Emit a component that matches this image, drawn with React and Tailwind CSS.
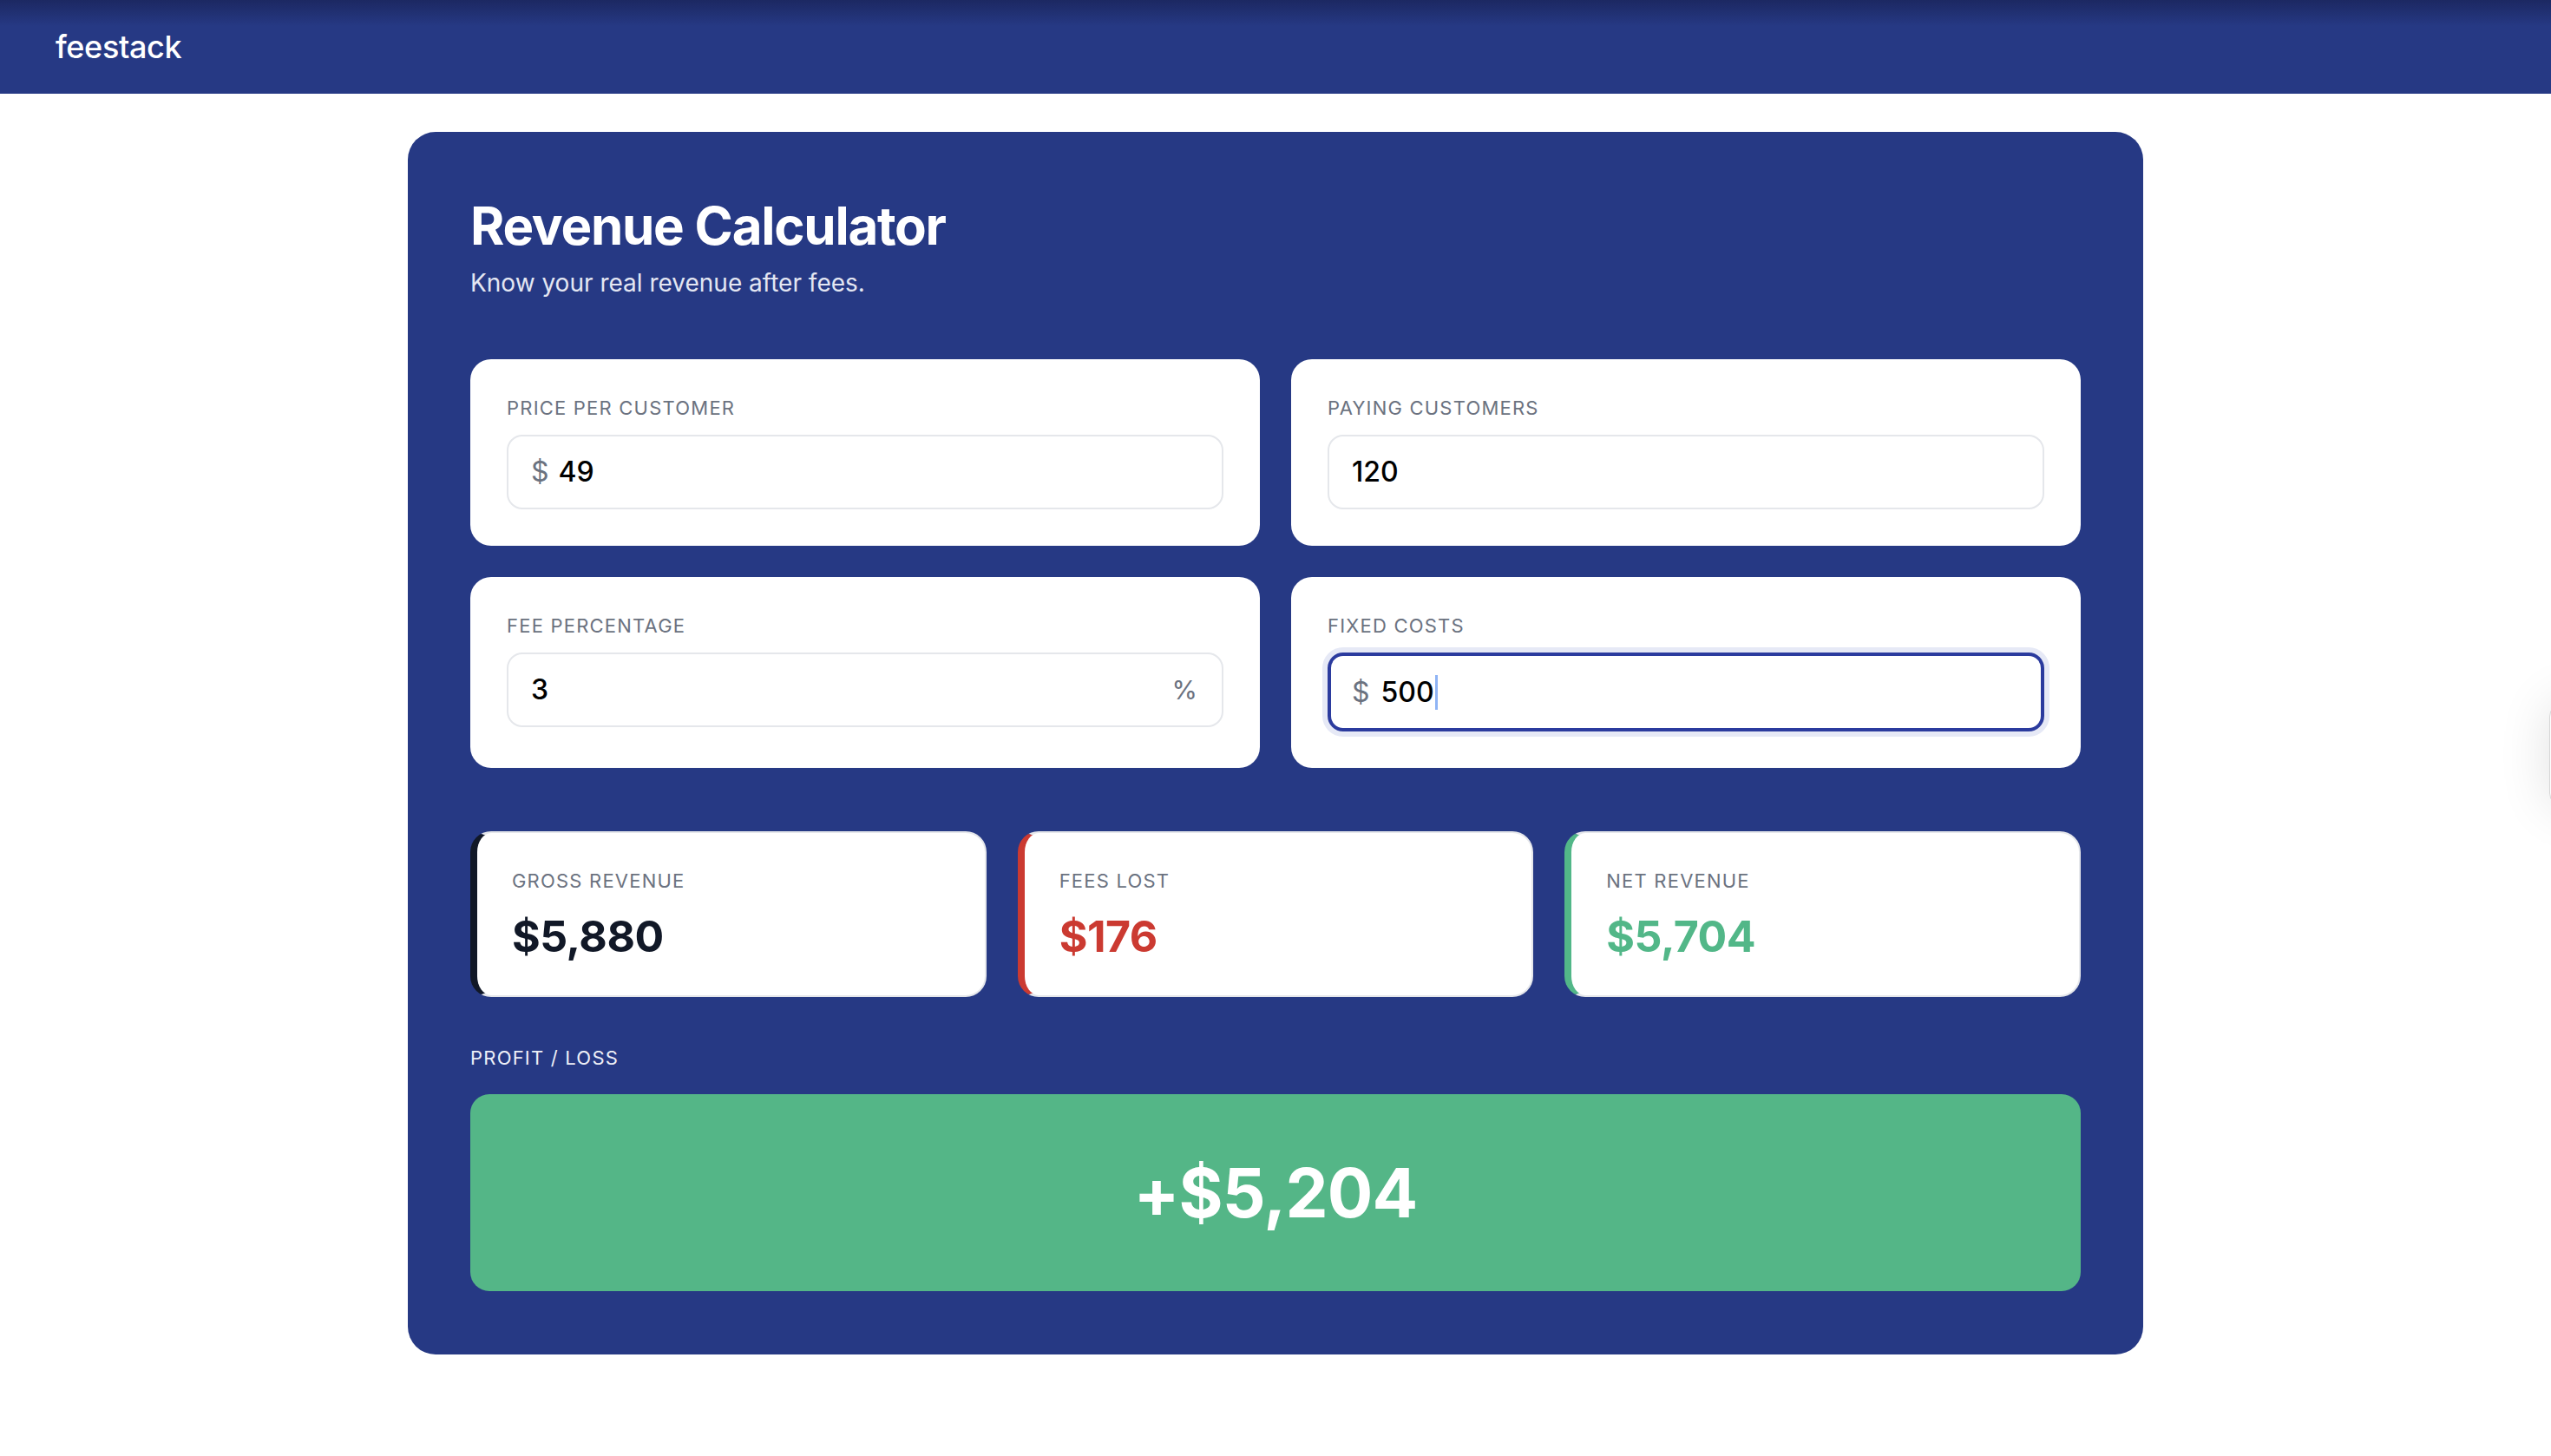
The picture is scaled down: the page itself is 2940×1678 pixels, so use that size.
import React from "react";

const font = { fontFamily: "Inter, 'Noto Sans', 'Liberation Sans', sans-serif" };

function InputCard({ label, prefix, value, suffix, focused }) {
  return (
    <div className="bg-white rounded-[24px] pt-[40px] pb-[42px] px-[42px]">
      <div className="text-[22px] leading-[32px] font-normal tracking-[0.055em] text-[#6b7280] uppercase mb-[15px]">
        {label}
      </div>
      {focused ? (
        <div className="h-[91px] rounded-[18px] border-[4px] border-[#2b3b9e] shadow-[0_0_0_6px_#e6e9f6] flex items-center pl-[24px] pr-[24px]">
          {prefix && <span className="text-[32px] text-[#6b7280] mr-[13px]">{prefix}</span>}
          <span className="text-[32px] font-medium text-black">{value}</span>
          <span className="w-[3px] h-[40px] bg-[#8fb4f5] ml-[1px]"></span>
        </div>
      ) : (
        <div className="h-[86px] rounded-[18px] border-[2px] border-[#e5e7eb] flex items-center pl-[26px] pr-[28px]">
          {prefix && <span className="text-[32px] text-[#6b7280] mr-[11px]">{prefix}</span>}
          <span className="text-[32px] font-medium text-black flex-1">{value}</span>
          {suffix && <span className="text-[30px] text-[#6b7280]">{suffix}</span>}
        </div>
      )}
    </div>
  );
}

function StatCard({ label, value, borderClass, textClass }) {
  return (
    <div className={`bg-white rounded-[24px] border-[2px] border-[#e5e7eb] border-l-[8px] ${borderClass} pl-[40px] pr-[38px] pt-[39px] pb-[38px]`}>
      <div className="text-[22px] leading-[32px] font-normal tracking-[0.055em] text-[#6b7280] uppercase">
        {label}
      </div>
      <div className={`mt-[18px] text-[50px] leading-[60px] font-bold tracking-[-0.01em] ${textClass}`}>
        {value}
      </div>
    </div>
  );
}

export default function App() {
  return (
    <div style={font} className="min-h-[1678px] bg-white relative overflow-hidden">
      <header className="h-[108px] bg-[linear-gradient(to_bottom,#1c2862_0px,#263984_30px,#263984_108px)] flex items-center px-[64px]">
        <span className="text-white text-[36px] font-medium tracking-[-0.01em]">feestack</span>
      </header>

      <main className="pt-[44px] pb-[116px]">
        <div className="w-[2000px] mx-auto bg-[#263984] rounded-[32px] p-[72px] pb-[73px]">
          <h1 className="text-white text-[60px] leading-[72px] font-bold tracking-[-0.021em]">
            Revenue Calculator
          </h1>
          <p className="mt-[10px] text-[28px] leading-[40px] text-[#e3e6f2]">
            Know your real revenue after fees.
          </p>

          <div className="mt-[68px] grid grid-cols-2 gap-x-[36px] gap-y-[36px]">
            <InputCard label="Price per customer" prefix="$" value="49" />
            <InputCard label="Paying customers" value="120" />
            <InputCard label="Fee percentage" value="3" suffix="%" />
            <InputCard label="Fixed costs" prefix="$" value="500" focused />
          </div>

          <div className="mt-[73px] grid grid-cols-3 gap-[36px]">
            <StatCard label="Gross revenue" value="$5,880" borderClass="border-l-[#111827]" textClass="text-[#111827]" />
            <StatCard label="Fees lost" value="$176" borderClass="border-l-[#cb3a31]" textClass="text-[#cb3a31]" />
            <StatCard label="Net revenue" value="$5,704" borderClass="border-l-[#52b788]" textClass="text-[#52b788]" />
          </div>

          <div className="mt-[54px] text-[22px] leading-[32px] font-normal tracking-[0.055em] text-[#eef0f8] uppercase">
            Profit / Loss
          </div>
          <div className="mt-[26px] h-[227px] rounded-[22px] bg-[#54b687] flex items-center justify-center">
            <span className="text-white text-[78px] font-bold tracking-[-0.01em] leading-none">+$5,204</span>
          </div>
        </div>
      </main>

      <div className="absolute top-[810px] right-[-120px] w-[122px] h-[120px] bg-white rounded-[16px] border border-[#d6d6d6] shadow-[0_0_60px_rgba(0,0,0,0.12)]"></div>
    </div>
  );
}
